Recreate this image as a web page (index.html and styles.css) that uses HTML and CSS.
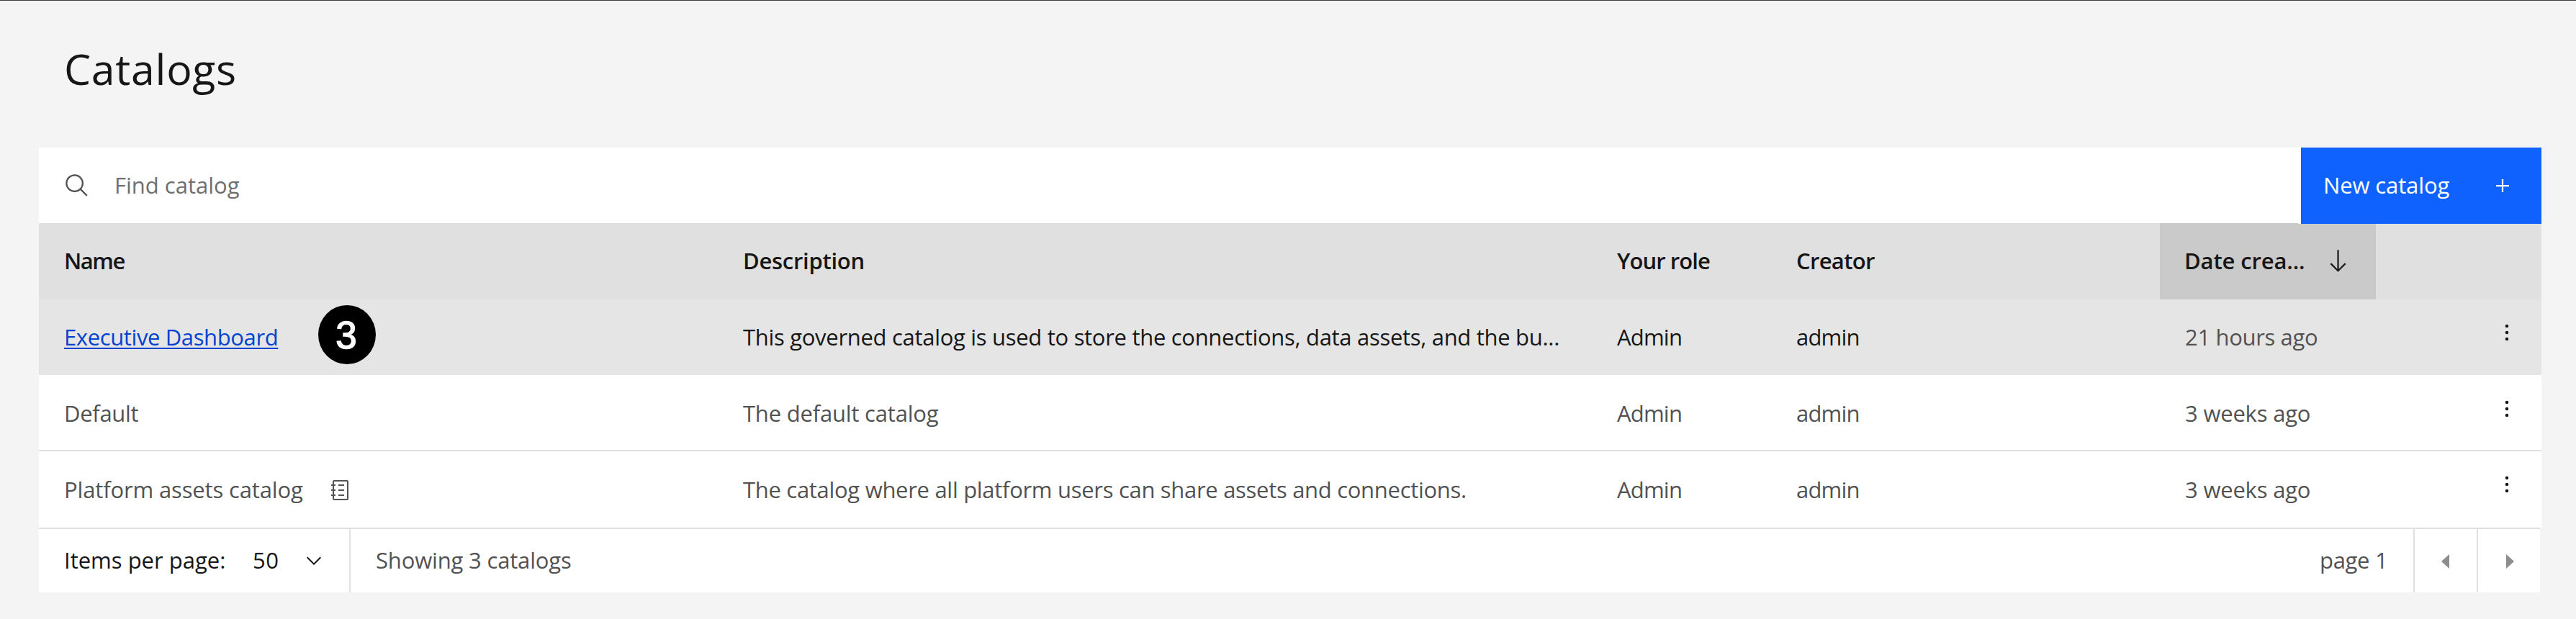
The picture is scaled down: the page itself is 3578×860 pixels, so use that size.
FILE: index.html
```html
<!DOCTYPE html>
<html lang="en">
<head>
<meta charset="utf-8">
<title>Catalogs</title>
<link rel="stylesheet" href="styles.css">
</head>
<body>
<svg class="sprite" aria-hidden="true">
  <symbol id="dots" viewBox="0 0 32 32"><circle cx="16" cy="8" r="2"/><circle cx="16" cy="16" r="2"/><circle cx="16" cy="24" r="2"/></symbol>
</svg>
<main class="page">
  <h1 class="title">Catalogs</h1>
  <section class="card">
    <div class="toolbar">
      <label class="search">
        <svg class="search-icon" viewBox="0 0 32 32"><path d="M29,27.5859l-7.5521-7.5521a11.0177,11.0177,0,1,0-1.4141,1.4141L27.5859,29ZM4,13a9,9,0,1,1,9,9A9.01,9.01,0,0,1,4,13Z"/></svg>
        <span class="placeholder">Find catalog</span>
      </label>
      <button class="new-button" type="button">
        <span>New catalog</span>
        <svg class="plus-icon" viewBox="0 0 32 32"><path d="M17 15V8h-2v7H8v2h7v7h2v-7h7v-2z"/></svg>
      </button>
    </div>

    <div class="row head">
      <div class="cell name th-name">Name</div>
      <div class="cell th-desc">Description</div>
      <div class="cell th-role">Your role</div>
      <div class="cell th-creator">Creator</div>
      <div class="cell sorted">
        <span class="th-date">Date crea...</span>
        <svg class="sort-icon" viewBox="0 0 16 16"><path d="M12.3 9.3 8.5 13.1V1h-1v12.1L3.7 9.3 3 10l5 5 5-5z"/></svg>
      </div>
      <div class="cell"></div>
    </div>

    <div class="row active">
      <div class="cell name"><a class="link" href="#">Executive Dashboard</a><span class="badge">3</span></div>
      <div class="cell">This governed catalog is used to store the connections, data assets, and the bu...</div>
      <div class="cell admin">Admin</div>
      <div class="cell admin">admin</div>
      <div class="cell date">21 hours ago</div>
      <div class="cell actions"><svg class="menu-icon"><use href="#dots"/></svg></div>
    </div>

    <div class="row second">
      <div class="cell name">Default</div>
      <div class="cell short">The default catalog</div>
      <div class="cell admin">Admin</div>
      <div class="cell admin">admin</div>
      <div class="cell date weeks">3 weeks ago</div>
      <div class="cell actions"><svg class="menu-icon"><use href="#dots"/></svg></div>
    </div>

    <div class="row third">
      <div class="cell name platform"><span>Platform assets catalog</span>
        <svg class="book-icon" viewBox="0 0 24 28"><rect x="3" y="1" width="20" height="26" rx="1"/><path d="M0 7h6M0 14h6M0 21h6M10 7h8M10 14h8M10 21h8"/></svg>
      </div>
      <div class="cell">The catalog where all platform users can share assets and connections.</div>
      <div class="cell admin">Admin</div>
      <div class="cell admin">admin</div>
      <div class="cell date weeks">3 weeks ago</div>
      <div class="cell actions"><svg class="menu-icon"><use href="#dots"/></svg></div>
    </div>

    <footer class="pagination">
      <div class="per-page">
        <span class="per-label">Items per page:</span>
        <span class="per-value">50</span>
        <svg class="chevron" viewBox="0 0 16 16"><path d="M8 11 3 6l.7-.7L8 9.6l4.3-4.3.7.7z"/></svg>
      </div>
      <span class="showing">Showing 3 catalogs</span>
      <span class="page-label">page 1</span>
      <button class="pager" type="button"><svg class="caret" viewBox="0 0 11 20"><path d="M11 0v20L0 10z"/></svg></button>
      <button class="pager" type="button"><svg class="caret" viewBox="0 0 11 20"><path d="M0 0v20l11-10z"/></svg></button>
    </footer>
  </section>
</main>
</body>
</html>
```
FILE: styles.css
```css
* { box-sizing: border-box; }

body {
  margin: 0;
  background: #f4f4f4;
  color: #525252;
  font-family: "Open Sans", "Noto Sans", sans-serif;
  font-size: 31px;
  letter-spacing: -0.3px;
}

svg { display: block; flex: none; fill: currentColor; }
.sprite { position: absolute; width: 0; height: 0; }

button {
  margin: 0;
  padding: 0;
  border: 0;
  background: none;
  color: inherit;
  font: inherit;
  letter-spacing: inherit;
}

.page {
  min-height: 860px;
  padding: 44px 48px 0 54px;
  border-top: 1px solid #3b3b3d;
}

.title {
  height: 160px;
  margin: 0;
  padding-left: 35px;
  color: #161616;
  font-size: 59px;
  font-weight: 400;
  line-height: 100px;
  letter-spacing: 0.7px;
}

.toolbar {
  display: flex;
  align-items: flex-start;
  height: 105px;
  background: #fff;
}

.search { display: flex; flex: 1; padding-left: 35px; }
.search-icon { width: 36px; height: 36px; margin-top: 35px; }
.placeholder {
  padding-left: 34px;
  color: #6f6f6f;
  line-height: 104px;
  letter-spacing: 0;
}

.new-button {
  position: relative;
  z-index: 1;
  display: flex;
  width: 334px;
  height: 106px;
  padding: 0 36px 0 31px;
  justify-content: space-between;
  background: #0f62fe;
  box-shadow: -4px 0 0 #fff;
  color: #fff;
  line-height: 104px;
  letter-spacing: -0.12px;
}
.plus-icon { width: 36px; height: 36px; margin-top: 35px; }

.row {
  display: grid;
  grid-template-columns: 978px 1214px 249px 505px 300px 1fr;
  background: #fff;
  line-height: 106px;
  white-space: nowrap;
}
.name { padding-left: 35px; }
.short { letter-spacing: -0.2px; }
.admin { letter-spacing: -0.8px; }
.date { padding-left: 35px; letter-spacing: -0.34px; }
.weeks { letter-spacing: -0.2px; }

.head {
  height: 106px;
  background: #e0e0e0;
  color: #161616;
  font-weight: 600;
  line-height: 104px;
}
.th-name { letter-spacing: -1.45px; }
.th-desc { letter-spacing: -0.28px; }
.th-role { letter-spacing: -0.92px; }
.th-creator { letter-spacing: -0.68px; }
.th-date { width: 196px; letter-spacing: -0.13px; }
.sorted { display: flex; padding-left: 34px; background: #cacaca; }
.sort-icon { width: 35px; height: 35px; margin-top: 35px; }

.active {
  height: 105px;
  background: #e5e5e5;
  color: #161616;
  line-height: 104px;
}
.active .name { position: relative; }
.active .date { color: #525252; }
.link {
  color: #0043ce;
  letter-spacing: -0.38px;
  text-decoration: underline;
  text-decoration-thickness: 2px;
  text-underline-offset: 3px;
  text-decoration-skip-ink: none;
}
.badge {
  position: absolute;
  top: 8px;
  left: 388px;
  width: 80px;
  height: 82px;
  padding-right: 2px;
  border-radius: 50%;
  background: #000;
  color: #fff;
  font-family: "Liberation Sans", Arial, sans-serif;
  font-size: 53px;
  line-height: 84px;
  letter-spacing: 0;
  text-align: center;
  -webkit-text-stroke: 1.4px #fff;
}

.second { height: 106px; border-bottom: 2px solid #e0e0e0; }
.third { height: 106px; }

.platform { display: flex; letter-spacing: -0.14px; }
.platform span { width: 371px; }
.book-icon {
  width: 24px;
  height: 28px;
  margin-top: 40px;
  fill: none;
  stroke: #525252;
  stroke-width: 2;
}

.actions { display: flex; justify-content: flex-end; padding: 28px 30.5px 0 0; color: #161616; }
.menu-icon { width: 36px; height: 36px; }
.second .menu-icon { margin-top: 1px; }

.pagination {
  display: flex;
  width: 3474px;
  height: 90px;
  border-top: 2px solid #e0e0e0;
  background: #fff;
  line-height: 86px;
  white-space: nowrap;
}
.per-page {
  display: flex;
  width: 433px;
  padding-left: 35px;
  border-right: 2px solid #e0e0e0;
  color: #161616;
}
.per-label { width: 262px; letter-spacing: 0; }
.per-value { width: 68.5px; letter-spacing: 0.6px; }
.chevron { width: 32px; height: 32px; margin-top: 28px; }
.showing { flex: 1; padding-left: 35px; letter-spacing: -0.17px; }
.page-label { width: 130px; }
.pager {
  display: flex;
  width: 88px;
  padding: 35px 0 0 37px;
  border-left: 2px solid #e0e0e0;
  color: #8d8d8d;
}
.pager + .pager { padding-left: 39px; }
.caret { width: 11px; height: 20px; }
```
